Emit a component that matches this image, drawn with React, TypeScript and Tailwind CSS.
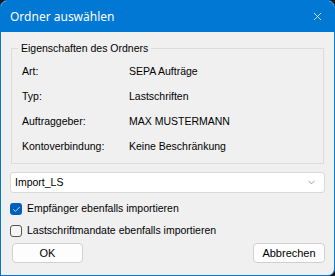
import { ChevronDown, X, Check } from "lucide-react";

const rows = [
  ["Art:", "SEPA Aufträge"],
  ["Typ:", "Lastschriften"],
  ["Auftraggeber:", "MAX MUSTERMANN"],
  ["Kontoverbindung:", "Keine Beschränkung"],
];

export default function App() {
  return (
    <div className="w-[335px] h-[276px] bg-[#1a1a1a] font-['Liberation_Sans',Arial,sans-serif] text-[10.5px] text-black">
      <div className="flex flex-col h-full rounded-t-[7px] rounded-br-[7px] border border-[#0078d4] bg-[#f0f0f0] overflow-hidden">
        <div className="flex items-center justify-between h-[31px] bg-[#0078d4] pl-[9px] pr-[10px] text-white">
          <span className="text-[12px] font-['Noto_Sans',sans-serif] pt-[1px]">Ordner auswählen</span>
          <X size={13} strokeWidth={1.4} />
        </div>

        <div className="flex flex-col px-[9px]">
          <fieldset className="mt-[10px] mx-[1px] h-[122px] border border-[#dcdcdc] pl-[10px] pr-[8px]">
            <legend className="ml-[-4px] px-[3px] leading-[12px]">Eigenschaften des Ordners</legend>
            <div className="flex flex-col gap-[13px] pt-[12px]">
              {rows.map(([k, v]) => (
                <div key={k} className="flex h-[12px] items-center">
                  <span className="w-[107px]">{k}</span>
                  <span>{v}</span>
                </div>
              ))}
            </div>
          </fieldset>

          <div className="mt-[8px] flex h-[21px] items-center justify-between rounded-[3px] border border-[#d9d9d9] bg-white pl-[4px] pr-[7px]">
            <span>Import_LS</span>
            <ChevronDown size={11} strokeWidth={1.3} className="text-[#606060]" />
          </div>

          <label className="mt-[10px] flex items-center gap-[5px] h-[12px]">
            <span className="flex h-[12px] w-[12px] items-center justify-center rounded-[3px] bg-[#005fb8]">
              <Check size={9} strokeWidth={2} className="text-white" />
            </span>
            <span>Empfänger ebenfalls importieren</span>
          </label>

          <label className="mt-[10px] flex items-center gap-[5px] h-[12px]">
            <span className="h-[12px] w-[12px] rounded-[3px] border border-[#555] bg-[#f6f6f6]" />
            <span>Lastschriftmandate ebenfalls importieren</span>
          </label>

          <div className="mt-[6px] flex justify-between pl-[2px]">
            <button className="h-[20px] w-[71px] rounded-[4px] border border-[#d0d0d0] bg-[#fdfdfd] text-[11px]">OK</button>
            <button className="h-[20px] w-[72px] rounded-[4px] border border-[#d0d0d0] bg-[#fdfdfd] text-[11px]">Abbrechen</button>
          </div>
        </div>
      </div>
    </div>
  );
}
